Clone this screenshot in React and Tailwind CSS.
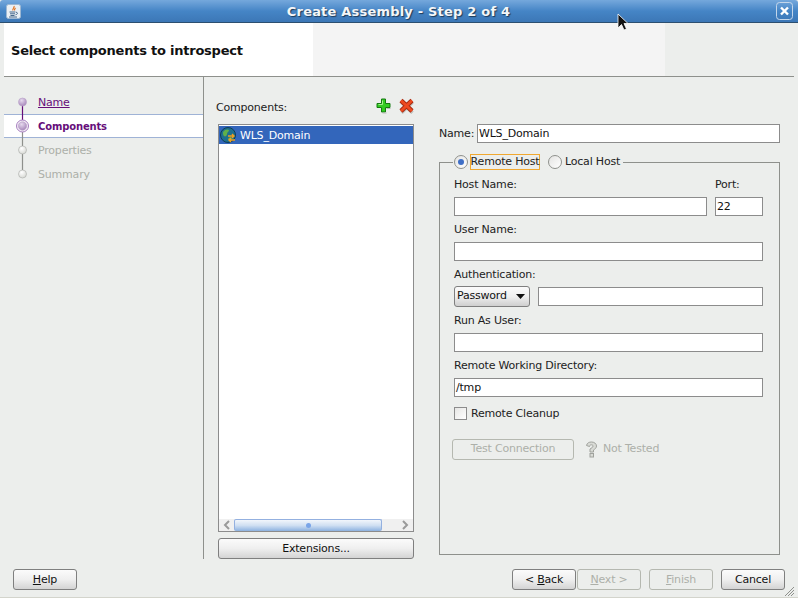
import React from "react";

const font = { fontFamily: '"DejaVu Sans", sans-serif' };

// Wizard train marker, drawn per row
const TrainNode = ({ top, bottom, state }) => {
    const purple = state !== "todo";
    return (
        <svg width="36" height="24" className="shrink-0 -my-px">
            <defs>
                <radialGradient id={`node-${state}`} cx="40%" cy="30%" r="75%">
                    <stop offset="0" stopColor={purple ? "#e6daee" : "#ffffff"} />
                    <stop offset="1" stopColor={purple ? "#a483b8" : "#d5d7d2"} />
                </radialGradient>
            </defs>
            {top && <line x1="18.5" y1="0" x2="18.5" y2="12" stroke={top} strokeWidth="1.2" />}
            {bottom && <line x1="18.5" y1="12" x2="18.5" y2="24" stroke={bottom} strokeWidth="1.2" />}
            {state === "current" && <circle cx="18.5" cy="12" r="6" fill="#f6f0f8" stroke="#a77fc0" strokeWidth="1" />}
            <circle cx="18.5" cy="12" r={state === "current" ? 4.2 : 4} fill={`url(#node-${state})`} stroke={purple ? "#b9a3c8" : "#a8aaa6"} strokeWidth="0.6" />
        </svg>
    );
};

const Field = ({ label, children }) => (
    <div className="mt-[6px] first:mt-[7px]">
        <div className="h-[14px] leading-[16px] mb-[6px] text-[#222]">{label}</div>
        {children}
    </div>
);

const TextInput = ({ value = "", className = "w-full" }) => (
    <div className={`h-[19px] bg-white border border-[#8c8c8c] px-[1px] leading-[18px] text-[#111] ${className}`}>
        {value}
    </div>
);

const Button = ({ children, disabled, className = "w-16" }) => (
    <div
        className={`h-[21px] rounded-[3px] border flex items-center justify-center pt-[1px] ${className} ${
            disabled
                ? "border-[#b5b8b0] text-[#adb0a9]"
                : "border-[#7f7f7f] text-[#111] bg-gradient-to-b from-[#fbfbfb] via-[#efefef] to-[#d4d4d4]"
        }`}
    >
        {children}
    </div>
);

const JavaIcon = () => (
    <svg width="15" height="15" viewBox="0 0 15 15" className="shrink-0">
        <rect x="0.5" y="0.5" width="14" height="14" rx="2" fill="#eaeff4" stroke="#9db7d2" />
        <path d="M8 2c1 1.5-2 2.5-1 4.5M9.5 4c-1 1-1.5 1.5-.8 2.5" fill="none" stroke="#e2711d" strokeWidth="1.2" />
        <path d="M3.5 8h6M4 9.8h5M4.5 11.5h4M3 13h8M10 8.2c2 0 2 2.2-.5 2.6" fill="none" stroke="#47688c" strokeWidth="1" />
    </svg>
);

const CloseIcon = () => (
    <svg width="17" height="18" viewBox="0 0 17 18" className="shrink-0">
        <rect x="0.5" y="0.5" width="16" height="17" rx="3" fill="none" stroke="#c4d6ea" />
        <path d="M5 5.5l7 7M12 5.5l-7 7" stroke="#ffffff" strokeWidth="2.4" />
    </svg>
);

const PlusIcon = () => (
    <svg width="15" height="16" viewBox="0 0 15 16" className="shrink-0">
        <path d="M5.5 1h4v4.5H14v4H9.5V14h-4V9.5H1v-4h4.5z" fill="#33cc22" stroke="#157a10" strokeWidth="1" />
        <path d="M6.5 2.5v4H2.5" fill="none" stroke="#a4f08c" strokeWidth="1" />
        <path d="M10.5 15h-4M14.5 10.5h-4" stroke="#b8bab6" strokeWidth="1" />
    </svg>
);

const DeleteIcon = () => (
    <svg width="15" height="16" viewBox="0 0 15 16" className="shrink-0">
        <path d="M2 3.500l11 10.500M13 3.500L2 14" stroke="#c0c2be" strokeWidth="3.500" transform="translate(0.5 0.8)" />
        <path d="M2 2.500l11 10.500M13 2.500L2 13" stroke="#a52a10" strokeWidth="4.500" />
        <path d="M2 2.500l11 10.500M13 2.500L2 13" stroke="#ee4a20" strokeWidth="2.800" />
    </svg>
);

const GlobeIcon = () => (
    <svg width="17" height="17" viewBox="0 0 17 17" className="shrink-0">
        <circle cx="8" cy="8" r="7.500" fill="#1d6f8f" stroke="#0f3d55" />
        <path d="M3 5c2-3 5-3 6-2 0 2-2 2-2 4s-2 3-3 2-1-2-1-4z" fill="#5fb04a" />
        <path d="M8 12c1-2 3-2 4-1l-1 3c-1 .5-2 0-3-2z" fill="#5fb04a" />
        <path d="M8 9h6M12 7l2 2-2 2M15 13H9M11 11l-2 2 2 2" fill="none" stroke="#f0a020" strokeWidth="1.400" />
    </svg>
);

const HelpIcon = () => (
    <svg width="13" height="17" viewBox="0 0 13 17" className="shrink-0">
        <path d="M1.500 4.500C2 2 4 1 6.500 1S11.500 2.500 11.500 5c0 2-1.500 3-3 4v2h-3.500V8c1.500-1 3-1.500 3-3 0-1-1-1.200-1.500-1.200S4.500 4 4.500 5.500z" fill="#d9dbd6" stroke="#a0a29d" />
        <rect x="5" y="12.500" width="3.500" height="3.500" fill="#d9dbd6" stroke="#a0a29d" />
    </svg>
);

const Radio = ({ checked }) => (
    <span className="w-[14px] h-[14px] rounded-full border border-[#8f918c] bg-gradient-to-br from-[#e4e4e2] to-white flex items-center justify-center shrink-0">
        {checked && <span className="w-[6px] h-[6px] rounded-full bg-[#3f6fc6]" />}
    </span>
);

const ScrollArrow = ({ d }) => (
    <svg width="8" height="10" viewBox="0 0 8 10" className="shrink-0">
        <path d={d} fill="none" stroke="#9a9a9a" strokeWidth="2" />
    </svg>
);

const App = () => (
    <div style={font} className="w-[798px] h-[598px] overflow-hidden bg-[#eceeec] text-[11px] tracking-[-0.2px] flex flex-col border-b border-[#d3d4cc]">
        {/* Title bar */}
        <div className="relative h-[23px] shrink-0 flex items-center justify-between pl-[6px] pr-[5px] rounded-t-[3px] border-b border-[#2c4f70] bg-gradient-to-b from-[#75a8dc] via-[#4585c6] to-[#3c77b6]">
            <JavaIcon />
            <div className="pt-[2px] text-[13px] tracking-[0.2px] font-bold text-[#f4f6f8] [text-shadow:1px_1px_1px_#1d3a58]">
                Create Assembly - Step 2 of 4
            </div>
            <CloseIcon />
            <svg width="12" height="19" viewBox="0 0 12 19" className="absolute left-[617px] top-[13px]">
                <path d="M1 1v14l3.500-3.500 2.500 5.500 2.500-1-2.500-5.500H11z" fill="#111" stroke="#fff" strokeWidth="0.8" />
            </svg>
        </div>

        <div className="flex-1 flex flex-col px-[4px] min-h-0">
            {/* Page header */}
            <div className="h-[54px] shrink-0 flex border-b border-[#8e908c]">
                <div className="w-[309px] bg-white flex items-center pl-[7px] pt-[3px] text-[13px] tracking-[-0.23px] font-bold text-[#111]">
                    Select components to introspect
                </div>
                <div className="w-[352px] bg-[#f4f4f4]" />
            </div>

            {/* Wizard body */}
            <div className="h-[482px] shrink-0 flex">
                <div className="w-[200px] shrink-0 border-r border-[#8e908c] pt-[13px]">
                    <div className="h-6 flex items-center text-[#660e7a]">
                        <TrainNode bottom="#660e7a" state="done" />
                        <span className="-ml-[2px] mt-[2px] underline">Name</span>
                    </div>
                    <div className="h-6 flex items-center bg-white border-y border-[#9fb3d6] font-bold text-[#660e7a]">
                        <TrainNode top="#660e7a" bottom="#8e908c" state="current" />
                        <span className="-ml-[2px] text-[10px] tracking-[-0.15px]">Components</span>
                    </div>
                    <div className="h-6 flex items-center text-[#adb0a9]">
                        <TrainNode top="#8e908c" bottom="#8e908c" state="todo" />
                        <span className="-ml-[2px] mt-[2px]">Properties</span>
                    </div>
                    <div className="h-6 flex items-center text-[#adb0a9]">
                        <TrainNode top="#8e908c" state="todo" />
                        <span className="-ml-[2px] mt-[2px]">Summary</span>
                    </div>
                </div>

                {/* Components list */}
                <div className="w-[210px] shrink-0 pl-[14px] flex flex-col">
                    <div className="h-[47px] flex items-center justify-between pt-[11px] -ml-[2px]">
                        <span className="mt-[4px] text-[#222]">Components:</span>
                        <div className="flex items-center gap-[8px]">
                            <PlusIcon />
                            <DeleteIcon />
                        </div>
                    </div>
                    <div className="h-[408px] bg-white border border-[#8c8c8c] flex flex-col justify-between pt-[1px]">
                        <div className="h-[18px] bg-[#3366bb] flex items-center gap-[3px] pl-[1px] text-white">
                            <GlobeIcon />
                            <span className="mt-[3px]">WLS_Domain</span>
                        </div>
                        <div className="h-[12px] bg-[#f0f0f0] flex items-center">
                            <div className="w-[15px] flex justify-center"><ScrollArrow d="M6 1L2 5l4 4" /></div>
                            <div className="w-[148px] h-[12px] rounded-[2px] border-x border-t border-[#93b0e0] bg-gradient-to-b from-[#f2f6fb] via-[#cfdff2] to-[#8db2e0] flex items-center justify-center">
                                <span className="w-[5px] h-[5px] rounded-full bg-[#7aa5e8]" />
                            </div>
                            <div className="flex-1 flex justify-end pr-[4px]"><ScrollArrow d="M2 1l4 4-4 4" /></div>
                        </div>
                    </div>
                    <Button className="w-full mt-[6px]">Extensions...</Button>
                </div>

                {/* Host details */}
                <div className="flex-1 pl-[25px] pr-[14px] pt-[47px]">
                    <div className="flex items-center justify-between">
                        <span className="mt-[1px] text-[#222]">Name:</span>
                        <TextInput value="WLS_Domain" className="w-[303px]" />
                    </div>
                    <fieldset className="mt-[11px] h-[401px] border border-[#8e908c] pl-[14px] pr-[16px]">
                        <legend className="-ml-[1px] h-4 flex items-center whitespace-nowrap text-[#222]">
                            <span className="pl-[1px] pr-[2px] flex items-center"><Radio checked /></span>
                            <span className="w-[70px] h-4 border border-[#f0a830] flex items-center justify-center pt-[1px]">Remote Host</span>
                            <span className="ml-[8px] mr-[3px] flex items-center"><Radio /></span>
                            <span className="pr-[3px] pt-[1px]">Local Host</span>
                        </legend>

                        <div className="flex gap-[8px]">
                            <div className="flex-1">
                                <Field label="Host Name:"><TextInput /></Field>
                            </div>
                            <div className="w-[48px]">
                                <Field label="Port:"><TextInput value="22" /></Field>
                            </div>
                        </div>
                        <Field label="User Name:"><TextInput /></Field>
                        <Field label="Authentication:">
                            <div className="flex items-center gap-[8px] h-[21px] -mt-[1px]">
                                <div className="w-[76px] h-[21px] rounded-[3px] border border-[#7f7f7f] bg-gradient-to-b from-[#fbfbfb] via-[#efefef] to-[#cfcfcf] flex items-center justify-between pl-[2px] pr-[4px] text-[#111]">
                                    <span>Password</span>
                                    <svg width="9" height="5" viewBox="0 0 9 5"><path d="M0 0h9L4.500 5z" fill="#111" /></svg>
                                </div>
                                <TextInput className="flex-1" />
                            </div>
                        </Field>
                        <Field label="Run As User:"><TextInput /></Field>
                        <Field label="Remote Working Directory:"><TextInput value="/tmp" /></Field>
                        <div className="mt-[8px] flex items-center gap-[4px] text-[#222]">
                            <span className="w-[13px] h-[13px] border border-[#8c8c8c] bg-gradient-to-br from-[#e6e6e4] to-white shrink-0" />
                            <span className="mt-[1px]">Remote Cleanup</span>
                        </div>
                        <div className="mt-[16px] -ml-[2px] flex items-center">
                            <Button disabled className="w-[122px]">Test Connection</Button>
                            <span className="ml-[11px] mr-[5px] flex"><HelpIcon /></span>
                            <span className="text-[#adb0a9]">Not Tested</span>
                        </div>
                    </fieldset>
                </div>
            </div>

            {/* Footer buttons */}
            <div className="relative flex-1 flex items-start justify-between pt-[10px] px-[9px]">
                <Button><span><u>H</u>elp</span></Button>
                <div className="flex">
                    <Button><span>&lt; <u>B</u>ack</span></Button>
                    <Button disabled className="w-16 ml-[1px]"><span><u>N</u>ext &gt;</span></Button>
                    <Button disabled className="w-16 ml-[8px]"><span><u>F</u>inish</span></Button>
                    <Button className="w-16 ml-[8px]">Cancel</Button>
                </div>
                <svg width="9" height="9" viewBox="0 0 9 9" className="absolute right-0 bottom-[1px]">
                    <path d="M0 9l9-9M3 9l6-6M6 9l3-3" stroke="#8e908c" strokeWidth="1" />
                </svg>
            </div>
        </div>
    </div>
);

export default App;
